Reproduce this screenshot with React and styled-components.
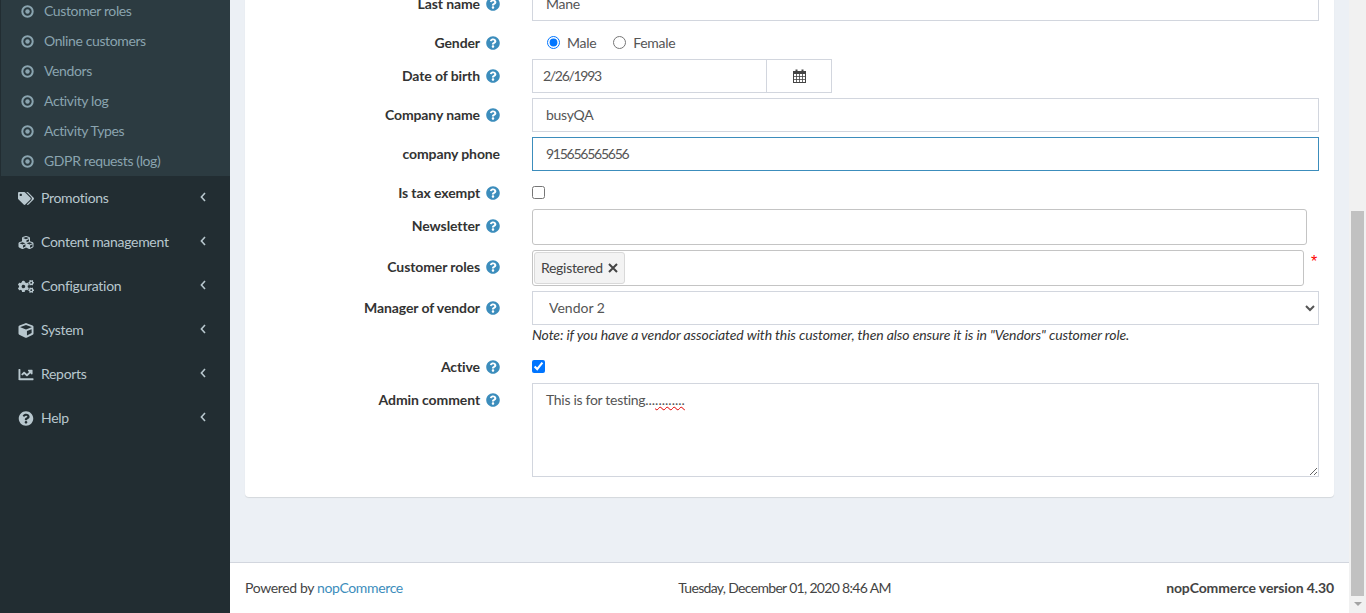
import React from 'react';
import styled, { createGlobalStyle } from 'styled-components';
import {
  FaTags,
  FaCubes,
  FaCogs,
  FaCube,
  FaChartLine,
  FaQuestionCircle,
} from 'react-icons/fa';

const subItems = ['Customer roles', 'Online customers', 'Vendors', 'Activity log', 'Activity Types', 'GDPR requests (log)'];

const navItems = [
  { label: 'Promotions', Icon: FaTags },
  { label: 'Content management', Icon: FaCubes },
  { label: 'Configuration', Icon: FaCogs },
  { label: 'System', Icon: FaCube },
  { label: 'Reports', Icon: FaChartLine },
  { label: 'Help', Icon: FaQuestionCircle },
];

function DotCircle() {
  return (
    <svg viewBox="0 0 13 13" width="13" height="13">
      <circle cx="6.5" cy="6.5" r="5.2" fill="none" stroke="currentColor" strokeWidth="2" />
      <circle cx="6.5" cy="6.5" r="2.2" fill="currentColor" />
    </svg>
  );
}

function Chevron() {
  return (
    <svg viewBox="0 0 6 10" width="6" height="10">
      <path d="M5 1 L1.4 5 L5 9" fill="none" stroke="currentColor" strokeWidth="1.6" />
    </svg>
  );
}

function CalendarGlyph() {
  return (
    <svg viewBox="0 0 13 14" width="13" height="14">
      <rect x="0.5" y="2.5" width="12" height="11" fill="none" stroke="currentColor" />
      <rect x="0" y="2" width="13" height="3" fill="currentColor" />
      <rect x="2.5" y="0.5" width="2" height="3" fill="currentColor" />
      <rect x="8.5" y="0.5" width="2" height="3" fill="currentColor" />
      <path d="M3.5 5V13M6.5 5V13M9.5 5V13M1 7.5H12M1 10.5H12" stroke="currentColor" strokeWidth="0.8" fill="none" />
    </svg>
  );
}

function CloseGlyph() {
  return (
    <svg viewBox="0 0 10 10" width="10" height="10">
      <path d="M1 1 L9 9 M9 1 L1 9" fill="none" stroke="currentColor" strokeWidth="2" />
    </svg>
  );
}

function App() {
  return (
    <Shell>
      <GlobalStyle />
      <Sidebar>
        <SubMenu>
          {subItems.map((item) => (
            <SubItem key={item}>
              <DotCircle />
              <span>{item}</span>
            </SubItem>
          ))}
        </SubMenu>
        {navItems.map(({ label, Icon }) => (
          <NavItem key={label}>
            <NavIcon>
              <Icon />
            </NavIcon>
            <NavLabel>{label}</NavLabel>
            <Caret>
              <Chevron />
            </Caret>
          </NavItem>
        ))}
      </Sidebar>
      <Main>
        <Content>
          <Card>
            <Row $height={34} $after={5}>
              <Label text="Last name" />
              <TextInput defaultValue="Mane" />
            </Row>
            <Row $height={33}>
              <Label text="Gender" />
              <RadioGroup>
                <RadioLabel>
                  <input type="radio" name="gender" defaultChecked />
                  <span>Male</span>
                </RadioLabel>
                <RadioLabel>
                  <input type="radio" name="gender" />
                  <span>Female</span>
                </RadioLabel>
              </RadioGroup>
            </Row>
            <Row $height={34} $after={5}>
              <Label text="Date of birth" />
              <DatePicker>
                <DateInput defaultValue="2/26/1993" />
                <DateButton>
                  <CalendarGlyph />
                </DateButton>
              </DatePicker>
            </Row>
            <Row $height={34} $after={5}>
              <Label text="Company name" />
              <TextInput defaultValue="busyQA" />
            </Row>
            <Row $height={34} $after={5}>
              <Label text="company phone" noHelp />
              <TextInput $focused $digits defaultValue="915656565656" />
            </Row>
            <Row $height={33}>
              <Label text="Is tax exempt" />
              <CheckBox type="checkbox" />
            </Row>
            <Row $height={36} $after={5} $top>
              <Label text="Newsletter" />
              <MultiSelect $width={775} />
            </Row>
            <Row $height={36} $after={5} $top>
              <Label text="Customer roles" />
              <MultiSelect $width={772}>
                <Chip>
                  <span>Registered</span>
                  <CloseGlyph />
                </Chip>
              </MultiSelect>
              <Required>*</Required>
            </Row>
            <Row $height={34}>
              <Label text="Manager of vendor" />
              <VendorSelect defaultValue="Vendor 2">
                <option>Vendor 2</option>
              </VendorSelect>
            </Row>
            <Row $height={20} $after={5}>
              <span />
              <Note>Note: if you have a vendor associated with this customer, then also ensure it is in "Vendors" customer role.</Note>
            </Row>
            <Row $height={33}>
              <Label text="Active" />
              <CheckBox type="checkbox" defaultChecked />
            </Row>
            <Row $height={94} $top>
              <Label text="Admin comment" />
              <CommentBox>
                This is for testing<Dots>...<Misspelled>.........</Misspelled></Dots>
              </CommentBox>
            </Row>
          </Card>
        </Content>
        <Footer>
          <FooterText $spacing={-0.36}>
            Powered by <FooterLink href="#">nopCommerce</FooterLink>
          </FooterText>
          <FooterText $spacing={-0.68}>Tuesday, December 01, 2020 8:46 AM</FooterText>
          <FooterText as="strong" $spacing={-0.12}>nopCommerce version 4.30</FooterText>
        </Footer>
      </Main>
      <ScrollTrack>
        <ScrollSpace />
        <ScrollThumb />
        <ScrollArrow />
      </ScrollTrack>
    </Shell>
  );
}

function Label({ text, noHelp }) {
  return (
    <LabelCell>
      <LabelText>{text}</LabelText>
      {!noHelp && (
        <HelpIcon>
          <FaQuestionCircle />
        </HelpIcon>
      )}
    </LabelCell>
  );
}

const GlobalStyle = createGlobalStyle`
  html, body {
    margin: 0;
    height: 100%;
    overflow: hidden;
  }
  body {
    font-family: Lato, "Open Sans", sans-serif;
    font-size: 14px;
    letter-spacing: -0.3px;
    color: #333;
  }
`;

const Shell = styled.div`
  display: flex;
  height: 613px;
  overflow: hidden;
`;

const Sidebar = styled.nav`
  flex: 0 0 230px;
  background: #222d32;
  overflow: hidden;
`;

const SubMenu = styled.ul`
  list-style: none;
  margin: -4px 0 0;
  padding: 0;
  background: #2c3b41;
  border-left: 1px solid #222d32;
`;

const SubItem = styled.li`
  display: flex;
  align-items: center;
  gap: 10px;
  height: 30px;
  padding-left: 20px;
  color: #8aa4af;
  letter-spacing: -0.38px;
  span {
    padding-bottom: 2px;
  }
`;

const NavItem = styled.div`
  display: flex;
  align-items: center;
  height: 44px;
  padding: 0 24px 0 18px;
  color: #b8c7ce;
`;

const NavIcon = styled.span`
  display: flex;
  flex: 0 0 23px;
  svg {
    width: 16px;
    height: 15px;
  }
`;

const NavLabel = styled.span`
  padding-bottom: 2px;
`;

const Caret = styled.span`
  display: flex;
  margin-left: auto;
  padding-bottom: 2px;
`;

const Main = styled.main`
  flex: 1;
  display: flex;
  flex-direction: column;
  min-width: 0;
`;

const Content = styled.div`
  flex: 1;
  background: #ecf0f5;
  padding: 0 15px;
  overflow: hidden;
`;

const Card = styled.section`
  margin-top: -13px;
  padding: 0 15px 20px 0;
  background: #fff;
  border-radius: 0 0 4px 4px;
  box-shadow: 0 1px 1px rgba(0, 0, 0, 0.1);
`;

const Row = styled.div`
  display: flex;
  align-items: ${(p) => (p.$top ? 'flex-start' : 'center')};
  height: ${(p) => p.$height}px;
  margin-bottom: ${(p) => p.$after || 0}px;
  & > :first-child {
    flex: 0 0 287px;
  }
`;

const LabelCell = styled.div`
  align-self: flex-start;
  display: flex;
  align-items: center;
  justify-content: flex-end;
  gap: 6px;
  height: 34px;
  padding-right: 32px;
  box-sizing: border-box;
`;

const LabelText = styled.label`
  padding-bottom: 2px;
  font-weight: 700;
  color: #333;
  letter-spacing: -0.1px;
`;

const HelpIcon = styled.span`
  display: flex;
  color: #3c8dbc;
  svg {
    width: 14px;
    height: 14px;
  }
`;

const TextInput = styled.input`
  flex: 1;
  height: 34px;
  box-sizing: border-box;
  padding: 0 13px 2px;
  border: 1px solid ${(p) => (p.$focused ? '#3c8dbc' : '#d2d6de')};
  outline: none;
  font: inherit;
  letter-spacing: ${(p) => (p.$digits ? '-1.25px' : '-0.3px')};
  color: #555;
`;

const RadioGroup = styled.div`
  display: flex;
  gap: 17px;
  padding-left: 15px;
`;

const RadioLabel = styled.label`
  display: flex;
  align-items: center;
  gap: 7px;
  color: #555;
  input {
    margin: 0;
    width: 13px;
    height: 13px;
  }
`;

const DatePicker = styled.div`
  display: flex;
  width: 300px;
  height: 34px;
  box-sizing: border-box;
  border: 1px solid #d2d6de;
`;

const DateInput = styled.input`
  flex: 1;
  min-width: 0;
  padding: 0 10px 2px;
  border: 0;
  outline: none;
  font: inherit;
  letter-spacing: -1.3px;
  color: #555;
`;

const DateButton = styled.span`
  flex: 0 0 64px;
  display: flex;
  align-items: center;
  justify-content: center;
  border-left: 1px solid #d2d6de;
  color: #444;
`;

const CheckBox = styled.input`
  margin: 0;
  width: 13px;
  height: 13px;
`;

const MultiSelect = styled.div`
  display: flex;
  align-items: center;
  width: ${(p) => p.$width}px;
  height: 36px;
  box-sizing: border-box;
  padding: 0 1px;
  border: 1px solid #c4c4c4;
  border-radius: 3px;
`;

const Chip = styled.span`
  display: flex;
  align-items: center;
  gap: 5px;
  height: 32px;
  box-sizing: border-box;
  padding: 0 6px;
  background: #f3f3f3;
  border: 1px solid #d9d9d9;
  border-radius: 3px;
  color: #444;
  span {
    padding-bottom: 2px;
  }
`;

const Required = styled.span`
  margin: 2px 0 0 7px;
  color: #f00;
  font-family: "Liberation Sans", sans-serif;
  font-size: 16px;
  line-height: 20px;
`;

const VendorSelect = styled.select`
  flex: 1;
  height: 34px;
  box-sizing: border-box;
  padding: 0 12px 2px;
  border: 1px solid #d2d6de;
  background: #fff;
  outline: none;
  font: inherit;
  color: #555;
`;

const Note = styled.em`
  flex: 1;
  padding-bottom: 2px;
  font-size: 14px;
  letter-spacing: -0.11px;
  color: #333;
`;

const CommentBox = styled.div`
  flex: 1;
  height: 94px;
  box-sizing: border-box;
  padding: 7px 13px;
  border: 1px solid #d2d6de;
  color: #555;
  overflow: auto;
  resize: vertical;
`;

const Dots = styled.span`
  letter-spacing: 0;
`;

const Misspelled = styled.span`
  text-decoration: underline wavy #e00000 1px;
`;

const Footer = styled.footer`
  flex: 0 0 51px;
  display: flex;
  align-items: center;
  justify-content: space-between;
  box-sizing: border-box;
  padding: 0 15px 2px;
  background: #fff;
  border-top: 1px solid #d2d6de;
  color: #444;
`;

const FooterText = styled.span`
  letter-spacing: ${(p) => p.$spacing}px;
`;

const FooterLink = styled.a`
  color: #3c8dbc;
  text-decoration: none;
`;

const ScrollTrack = styled.div`
  flex: 0 0 17px;
  display: flex;
  flex-direction: column;
  align-items: center;
  background: #f1f1f1;
`;

const ScrollSpace = styled.div`
  height: 211px;
`;

const ScrollThumb = styled.div`
  width: 13px;
  height: 385px;
  background: #c1c1c1;
`;

const ScrollArrow = styled.div`
  margin-top: 6px;
  border-left: 4px solid transparent;
  border-right: 4px solid transparent;
  border-top: 4px solid #a3a3a3;
`;

export default App;
